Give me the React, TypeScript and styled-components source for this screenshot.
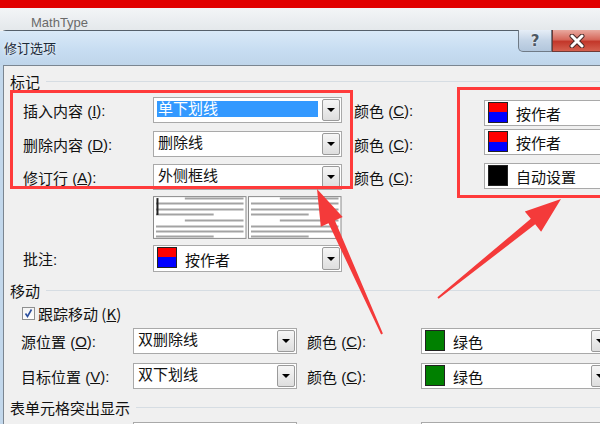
import React from "react";
import styled, { createGlobalStyle } from "styled-components";

const GlobalStyle = createGlobalStyle`
  html, body {
    margin: 0;
    padding: 0;
    background: #f0f0f0;
  }
  body {
    width: 600px;
    height: 424px;
    overflow: hidden;
    font-family: "Liberation Sans", "Noto Sans CJK SC", sans-serif;
    color: #111;
  }
`;

const Page = styled.div`
  position: relative;
  width: 600px;
  height: 424px;
  overflow: hidden;
  display: flex;
  flex-direction: column;
`;

const TopStrip = styled.div`
  height: 8px;
  flex-shrink: 0;
  background: #e10000;
`;

const AppBar = styled.div`
  height: 22px;
  flex-shrink: 0;
  box-sizing: border-box;
  padding: 8px 0 0 31px;
  background: linear-gradient(#f3f5f7, #e4e8eb);
  font-size: 13px;
  line-height: 14px;
  color: #6a6a6a;
`;

const Dialog = styled.div`
  flex: 1;
  display: flex;
  flex-direction: column;
  border-top: 1px solid #55606b;
  border-top-left-radius: 6px;
  background: #c3d8ec;
`;

const TitleBar = styled.div`
  height: 34px;
  flex-shrink: 0;
  display: flex;
  justify-content: space-between;
  align-items: flex-start;
  background: linear-gradient(#d9e9f8, #c6dcf1 60%, #bfd5ea);
`;

const Title = styled.div`
  padding: 8px 0 0 4px;
  font-family: "Noto Sans CJK SC", sans-serif;
  font-size: 13px;
  line-height: 18px;
  color: #1c2a38;
  text-shadow: 0 0 4px #fff;
`;

const Buttons = styled.div`
  display: flex;
  margin-top: -1px;
`;

const HelpButton = styled.div`
  width: 34px;
  height: 22px;
  box-sizing: border-box;
  border: 1px solid #6f7a86;
  border-top: none;
  border-bottom-left-radius: 5px;
  background: linear-gradient(#e6eef7, #c4d4e6 50%, #b2c6dc);
  display: flex;
  align-items: center;
  justify-content: center;
  font: bold 15px "DejaVu Sans", sans-serif;
  color: #4d5864;
  text-shadow: 0 0 2px #fff;
`;

const CloseButton = styled.div`
  width: 48px;
  height: 22px;
  box-sizing: border-box;
  border: 1px solid #6f3a36;
  border-top: none;
  border-right: none;
  background: linear-gradient(#e9a99f, #d6695c 45%, #c3372a 55%, #d4604f);
  display: flex;
  align-items: center;
  justify-content: center;
`;

const Body = styled.div`
  flex: 1;
  margin-left: 3px;
  background: #f0f0f0;
  border-top: 1px solid #7b8691;
  border-left: 1px solid #7b8691;
  font-family: "Liberation Sans", "Noto Sans CJK SC", sans-serif;
  font-size: 15px;
`;

const GroupHeader = styled.div<{ $top: number }>`
  height: 22px;
  margin-top: ${(p) => p.$top}px;
  padding-left: 6px;
  display: flex;
  align-items: center;
  gap: 6px;
  font-family: "Noto Sans CJK SC", sans-serif;
  &::after {
    content: "";
    flex: 1;
    height: 1px;
    background: #d6dde3;
  }
`;

const FormGrid = styled.div<{ $cols: string; $rows: string; $pad: number; $top: number; $gap?: number }>`
  display: grid;
  grid-template-columns: ${(p) => p.$cols};
  grid-template-rows: ${(p) => p.$rows};
  row-gap: ${(p) => p.$gap ?? 0}px;
  align-items: start;
  padding-left: ${(p) => p.$pad}px;
  margin-top: ${(p) => p.$top}px;
`;

const Label = styled.div<{ $col: number }>`
  grid-column: ${(p) => p.$col};
  height: 26px;
  display: flex;
  align-items: center;
  white-space: nowrap;
  u {
    text-decoration: underline;
  }
`;

const Combo = styled.div<{ $col: number; $h?: number; $shift?: number }>`
  grid-column: ${(p) => p.$col};
  height: ${(p) => p.$h ?? 26}px;
  margin-top: ${(p) => p.$shift ?? 0}px;
  box-sizing: border-box;
  border: 1px solid #a9a9a9;
  background: #fff;
  display: flex;
  align-items: stretch;
`;

const ComboText = styled.div<{ $selected?: boolean }>`
  flex: 1;
  margin: 3px 3px 5px 3px;
  padding-left: 1px;
  display: flex;
  align-items: center;
  white-space: nowrap;
  line-height: 16px;
  background: ${(p) => (p.$selected ? "#3399ff" : "transparent")};
  color: ${(p) => (p.$selected ? "#fff" : "#111")};
`;

const ColorValue = styled.div`
  flex: 1;
  display: flex;
  align-items: flex-end;
  padding: 0 0 1px 3px;
  gap: 8px;
  white-space: nowrap;
  line-height: 18px;
`;

const Swatch = styled.div<{ $kind: "author" | "black" | "green" }>`
  width: 18px;
  height: 19px;
  margin-bottom: 1px;
  align-self: center;
  flex-shrink: 0;
  border: 1px solid #222;
  background: ${(p) =>
    p.$kind === "author"
      ? "linear-gradient(#ff0000 0 50%, #0000ff 50% 100%)"
      : p.$kind === "black"
      ? "#000"
      : "#008000"};
`;

const DropButton = styled.div`
  width: 18px;
  margin: 1px;
  box-sizing: border-box;
  border: 1px solid #9a9a9a;
  border-radius: 2px;
  background: linear-gradient(#f6f6f6, #dedede);
  display: flex;
  align-items: center;
  justify-content: center;
  &::after {
    content: "";
    border-left: 4px solid transparent;
    border-right: 4px solid transparent;
    border-top: 4px solid #000;
  }
`;

const PreviewBox = styled.div`
  grid-column: 2;
  height: 43px;
  display: flex;
`;

const CheckRow = styled.div`
  margin-top: 5px;
  padding-left: 18px;
  height: 14px;
  display: flex;
  align-items: center;
  gap: 3px;
  font-family: "Noto Sans CJK SC", sans-serif;
`;

const CheckBox = styled.div`
  width: 13px;
  height: 13px;
  box-sizing: border-box;
  border: 1px solid #8e8f8f;
  background: linear-gradient(#f4f4f4, #fdfdfd);
  display: flex;
`;

const Overlay = styled.svg`
  position: absolute;
  left: 0;
  top: 0;
  pointer-events: none;
`;

type Pt = [number, number];

function arrowPoints(tail: Pt, tip: Pt, tailW: number, neckW: number, headLen: number, headW: number) {
  const dx = tip[0] - tail[0];
  const dy = tip[1] - tail[1];
  const len = Math.hypot(dx, dy);
  const ux = dx / len;
  const uy = dy / len;
  const nx = -uy;
  const ny = ux;
  const bx = tip[0] - ux * headLen;
  const by = tip[1] - uy * headLen;
  const pts: Pt[] = [
    [tail[0] + (nx * tailW) / 2, tail[1] + (ny * tailW) / 2],
    [bx + (nx * neckW) / 2, by + (ny * neckW) / 2],
    [bx + (nx * headW) / 2, by + (ny * headW) / 2],
    tip,
    [bx - (nx * headW) / 2, by - (ny * headW) / 2],
    [bx - (nx * neckW) / 2, by - (ny * neckW) / 2],
    [tail[0] - (nx * tailW) / 2, tail[1] - (ny * tailW) / 2],
  ];
  return pts.map((p) => `${p[0].toFixed(1)},${p[1].toFixed(1)}`).join(" ");
}

const Preview = ({ cursor }: { cursor?: boolean }) => {
  const ys = [2, 7, 13, 18, 24, 30, 35, 40];
  const spans: [number, number][] = [
    [32, 91],
    [3, 91],
    [3, 91],
    [3, 61],
    [32, 91],
    [3, 91],
    [3, 91],
    [3, 61],
  ];
  return (
    <svg width="95" height="43" viewBox="0 0 95 43">
      <rect x="0.5" y="0.5" width="93" height="42" fill="#fff" stroke="#8a8a8a" />
      {ys.map((y, i) => (
        <line key={i} x1={spans[i][0]} x2={spans[i][1]} y1={y + 0.5} y2={y + 0.5} stroke="#a3a3a3" strokeWidth="2" />
      ))}
      {cursor && <line x1="4.5" x2="4.5" y1="2" y2="19" stroke="#222" strokeWidth="2" />}
    </svg>
  );
};

const TextCombo = ({ col, text, selected, h }: { col: number; text: string; selected?: boolean; h?: number }) => (
  <Combo $col={col} $h={h}>
    <ComboText $selected={selected}>{text}</ComboText>
    <DropButton />
  </Combo>
);

const ColorCombo = ({
  col,
  kind,
  text,
  h,
  shift,
}: {
  col: number;
  kind: "author" | "black" | "green";
  text: string;
  h?: number;
  shift?: number;
}) => (
  <Combo $col={col} $h={h} $shift={shift}>
    <ColorValue>
      <Swatch $kind={kind} />
      <span>{text}</span>
    </ColorValue>
    <DropButton />
  </Combo>
);

const ColorLabel = () => (
  <Label $col={4}>
    颜色 (<u>C</u>):
  </Label>
);

export default function App() {
  return (
    <>
      <GlobalStyle />
      <Page>
        <TopStrip />
        <AppBar>MathType</AppBar>
        <Dialog>
          <TitleBar>
            <Title>修订选项</Title>
            <Buttons>
              <HelpButton>?</HelpButton>
              <CloseButton>
                <svg width="16" height="14" viewBox="0 0 16 14">
                  <path d="M3 2 L13 12 M13 2 L3 12" stroke="#4a2a28" strokeWidth="5" strokeLinecap="round" />
                  <path d="M3 2 L13 12 M13 2 L3 12" stroke="#fff" strokeWidth="3" strokeLinecap="round" />
                </svg>
              </CloseButton>
            </Buttons>
          </TitleBar>
          <Body>
            <GroupHeader $top={4}>标记</GroupHeader>
            <FormGrid $cols="130px 189px 12px 130px 140px" $rows="34px 33px 32px 49px 27px" $pad={19} $top={5}>
              <Label $col={1}>
                插入内容 (<u>I</u>):
              </Label>
              <TextCombo col={2} text="单下划线" selected />
              <ColorLabel />
              <ColorCombo col={5} kind="author" text="按作者" shift={3} />

              <Label $col={1}>
                删除内容 (<u>D</u>):
              </Label>
              <TextCombo col={2} text="删除线" />
              <ColorLabel />
              <ColorCombo col={5} kind="author" text="按作者" shift={-2} />

              <Label $col={1}>
                修订行 (<u>A</u>):
              </Label>
              <TextCombo col={2} text="外侧框线" />
              <ColorLabel />
              <ColorCombo col={5} kind="black" text="自动设置" shift={-1} />

              <PreviewBox>
                <Preview cursor />
                <Preview />
              </PreviewBox>

              <Label $col={1}>批注:</Label>
              <ColorCombo col={2} kind="author" text="按作者" h={27} />
            </FormGrid>

            <GroupHeader $top={7}>移动</GroupHeader>
            <CheckRow>
              <CheckBox>
                <svg width="11" height="11" viewBox="0 0 11 11">
                  <path d="M2.5 5.5 L4.5 8.5 L8.5 1.5" fill="none" stroke="#2b4f9e" strokeWidth="1.6" />
                </svg>
              </CheckBox>
              <span>
                跟踪移动 (<u>K</u>)
              </span>
            </CheckRow>
            <FormGrid $cols="112px 164px 10px 114px 190px" $rows="26px 26px" $gap={9} $pad={17} $top={8}>
              <Label $col={1}>
                源位置 (<u>O</u>):
              </Label>
              <TextCombo col={2} text="双删除线" />
              <ColorLabel />
              <ColorCombo col={5} kind="green" text="绿色" />

              <Label $col={1}>
                目标位置 (<u>V</u>):
              </Label>
              <TextCombo col={2} text="双下划线" />
              <ColorLabel />
              <ColorCombo col={5} kind="green" text="绿色" />
            </FormGrid>

            <GroupHeader $top={7}>表单元格突出显示</GroupHeader>
            <FormGrid $cols="112px 164px 10px 114px 190px" $rows="26px" $pad={17} $top={4}>
              <Label $col={1} />
              <TextCombo col={2} text="" />
              <Label $col={4} />
              <TextCombo col={5} text="" />
            </FormGrid>
          </Body>
        </Dialog>

        <Overlay width="600" height="424" viewBox="0 0 600 424">
          <rect x="11.5" y="91.5" width="340" height="96" fill="none" stroke="#ff3b3b" strokeWidth="3" />
          <rect x="458.5" y="88.5" width="200" height="108" fill="none" stroke="#ff3b3b" strokeWidth="3" />
          <polygon points={arrowPoints([382, 334], [317, 189], 2, 7, 36, 24)} fill="#f43a3a" />
          <polygon points={arrowPoints([438, 298], [561, 199], 2, 7, 36, 26)} fill="#f43a3a" />
        </Overlay>
      </Page>
    </>
  );
}
